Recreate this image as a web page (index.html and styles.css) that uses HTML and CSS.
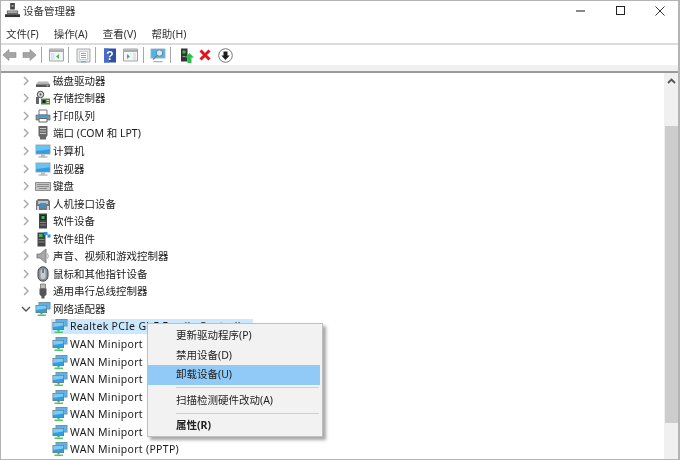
FILE: index.html
```html
<!DOCTYPE html>
<html lang="zh-CN">
<head>
<meta charset="utf-8">
<title>设备管理器</title>
<link rel="stylesheet" href="styles.css">
</head>
<body>
<svg class="defs" width="0" height="0" aria-hidden="true">
  <defs>
    <symbol id="chev-r" viewBox="0 0 8 10"><path d="M2 1l4 4-4 4" fill="none" stroke="#a6a6a6" stroke-width="1.4"/></symbol>
    <symbol id="chev-d" viewBox="0 0 10 8"><path d="M1 2l4 4 4-4" fill="none" stroke="#555" stroke-width="1.4"/></symbol>
    <symbol id="i-disk" viewBox="0 0 16 16"><path d="M3 8.500h10l2 3v2.500H1v-2.500z" fill="#b5b5b5"/><path d="M1 11.500h14V14H1z" fill="#555"/><path d="M11.500 12.300h2v1h-2z" fill="#9de08a"/></symbol>
    <symbol id="i-storage" viewBox="0 0 16 16"><circle cx="5.500" cy="4.500" r="3.200" fill="#d8d8d8" stroke="#444"/><circle cx="5.500" cy="4.500" r="1" fill="#444"/><path d="M1 7h3v7H1z" fill="#666"/><path d="M6 8.500h9v6H6z" fill="#4f8a58"/><path d="M7.500 10h3v3h-3z" fill="#222"/><path d="M11.500 10h2.500v1H11.500zM11.500 12h2.500v1H11.500z" fill="#d8d8a0"/></symbol>
    <symbol id="i-printer" viewBox="0 0 16 16"><path d="M4 2h8v5H4z" fill="#fff" stroke="#777"/><path d="M1 7h14v5H1z" fill="#8f979f" stroke="#555" stroke-width=".6"/><path d="M2.500 8h11v1.500h-11z" fill="#3aa0d8"/><path d="M4 10.500h8V14H4z" fill="#fff" stroke="#666"/></symbol>
    <symbol id="i-port" viewBox="0 0 16 16"><path d="M3.500 1h9v9.500l-1.500 2v2H5v-2l-1.500-2z" fill="#666"/><path d="M5 3h6v1H5zM5 5.500h6v1H5zM5 8h6v1H5z" fill="#c8c8c8"/></symbol>
    <symbol id="i-screen" viewBox="0 0 16 16"><path d="M.5 1.500h15v10H.5z" fill="#a8a8a8"/><path d="M1.200 2.200h13.600v8.600H1.200z" fill="#2e9fe6"/><path d="M1.200 2.200h13.600v4L1.200 8z" fill="#6cc3f2"/><path d="M6 11.500h4v2H6z" fill="#bbb"/><path d="M3.500 13.500h9v1h-9z" fill="#999"/></symbol>
    <symbol id="i-keyboard" viewBox="0 0 16 16"><path d="M.5 4.500h15v8H.5z" fill="#c6c6c6" stroke="#777" stroke-width=".8"/><path d="M2 6h12v1H2zM2 8h12v1H2zM4 10h8v1H4z" fill="#8b8b8b"/></symbol>
    <symbol id="i-hid" viewBox="0 0 16 16"><path d="M1 5l2-2h10l2 2v9H1z" fill="#72777d"/><path d="M3 5h10v3H3z" fill="#bcc3c9"/><path d="M5 7h6v5H5z" fill="#3f8fc8"/><path d="M2 10h2v4H2zM12 10h2v4h-2z" fill="#d5d5d5"/></symbol>
    <symbol id="i-softdev" viewBox="0 0 16 16"><path d="M4 .5h8v15H4z" fill="#444"/><path d="M5.200 2h5.600v5H5.200z" fill="#222"/><path d="M6.500 3h3v3h-3z" fill="#39c04a"/><path d="M5.200 9h5.600v1H5.200zM5.200 11.500h5.600v1H5.200z" fill="#888"/></symbol>
    <symbol id="i-softcomp" viewBox="0 0 16 16"><path d="M2.500 1.500h8v14h-8z" fill="#444"/><path d="M4 3h3.500v3H4z" fill="#39c04a"/><path d="M3.500 8h6v1h-6zM3.500 10.500h6v1h-6z" fill="#888"/><path d="M9 1h3.500v3H9zM12.500 3.500H15.500v3h-3z" fill="#2e8fd8"/></symbol>
    <symbol id="i-audio" viewBox="0 0 16 16"><path d="M2 6h3l6-5v14l-6-5H2z" fill="#a8a8a8" stroke="#6f6f6f" stroke-width=".8"/><path d="M12.500 5.500q1.500 2.500 0 5" fill="none" stroke="#9a9a9a"/></symbol>
    <symbol id="i-mouse" viewBox="0 0 16 16"><rect x="3" y=".8" width="10" height="14.400" rx="5" fill="#8c9299" stroke="#444"/><rect x="5.500" y="3" width="5" height="10" rx="2.500" fill="#c5ccd4"/><path d="M8 3v4" stroke="#444" stroke-width="1.200"/></symbol>
    <symbol id="i-usb" viewBox="0 0 16 16"><path d="M5.500 1h5v4.500h-5z" fill="#bdbdbd" stroke="#666" stroke-width=".7"/><path d="M4.500 5.500h7v6l-2 2v2h-3v-2l-2-2z" fill="#555"/></symbol>
    <symbol id="i-net" viewBox="0 0 16 16"><path d="M3.500 1h12v7.500h-12z" fill="#7d8b96"/><path d="M4.300 1.800h10.400v5.900H4.300z" fill="#58b4ea"/><path d="M.5 4h11.500v8H.5z" fill="#6f7d88"/><path d="M1.300 4.800h9.900v6.400H1.300z" fill="#2f9fe2"/><path d="M1.300 4.800h9.900v2.800L1.300 9z" fill="#7dcaf3"/><path d="M5.500 12h2v1.500h-2z" fill="#2fb84c"/><path d="M2.500 13.500h8.500V15H2.500z" fill="#4ec864"/></symbol>
  </defs>
</svg>

<div class="window">
  <header class="titlebar">
    <svg class="appicon" viewBox="0 0 16 16" width="15" height="15"><path d="M5.500 0h5v7h-5z" fill="#444"/><path d="M7 2h2v2H7z" fill="#aaa"/><path d="M2 8h12v4H2z" fill="#666"/><path d="M0 12h16v3H0z" fill="#333"/><path d="M3 9h10v1.500H3z" fill="#bbb"/></svg>
    <span class="title">设备管理器</span>
    <div class="controls">
      <span class="ctl ctl-min"></span>
      <span class="ctl ctl-max"></span>
      <svg class="ctl-close" viewBox="0 0 10 10" width="10" height="10"><path d="M.5.500l9 9M9.500.500l-9 9" stroke="#333" stroke-width="1" fill="none"/></svg>
    </div>
  </header>

  <nav class="menubar">
    <span class="menu-item">文件(F)</span>
    <span class="menu-item">操作(A)</span>
    <span class="menu-item">查看(V)</span>
    <span class="menu-item">帮助(H)</span>
  </nav>

  <div class="toolbar">
    <svg class="tb tb-back" viewBox="0 0 15 14"><path d="M7 1.500L.8 7 7 12.500V9.500h7v-5H7z" fill="#a5a5a5" stroke="#8a8a8a" stroke-width=".6"/></svg>
    <svg class="tb tb-fwd" viewBox="0 0 15 14"><path d="M8 1.500L14.200 7 8 12.500V9.500H1v-5h7z" fill="#a5a5a5" stroke="#8a8a8a" stroke-width=".6"/></svg>
    <span class="tsep tsep-a"></span>
    <svg class="tb tb-panel" viewBox="0 0 15 14"><path d="M.5 1h14v12H.500z" fill="#f3f5f7" stroke="#a0a4a8"/><path d="M1 1.500h13v2.500H1z" fill="#a9aeb3"/><path d="M2 5h3.500v7H2z" fill="#dfe4ea"/><path d="M10 6v5L7 8.500z" fill="#47b65a"/></svg>
    <span class="tsep tsep-b"></span>
    <svg class="tb tb-props" viewBox="0 0 15 15"><path d="M1 1h13v13H1z" fill="#e9ecef" stroke="#a6a9ad"/><path d="M3.500 3.500h8v8h-8z" fill="#fff" stroke="#b9bdc2" stroke-width=".7"/><path d="M5 5.500h5M5 7.500h5M5 9.500h5" stroke="#9aa0a6"/><path d="M5 13h5v1.500H5z" fill="#6ab9e6"/></svg>
    <span class="tsep tsep-c"></span>
    <svg class="tb tb-help" viewBox="0 0 12 15"><path d="M0 .5h12v14H0z" fill="#2f4fa8"/><path d="M0 .5h5v14H0z" fill="#4a6cc8"/><text x="6" y="11.500" text-anchor="middle" class="help-q">?</text></svg>
    <svg class="tb tb-panel2" viewBox="0 0 15 14"><path d="M.5 1h14v12H.500z" fill="#f3f5f7" stroke="#a0a4a8"/><path d="M1 1.500h13v2.500H1z" fill="#a9aeb3"/><path d="M10 5h3v7h-3z" fill="#dfe4ea"/><path d="M4 6v5l3-2.500z" fill="#47b65a"/></svg>
    <span class="tsep tsep-d"></span>
    <svg class="tb tb-scan" viewBox="0 0 16 15"><path d="M.5.500h15v10H.500z" fill="#9fb4c4"/><path d="M1.300 1.300h13.400v8.400H1.300z" fill="#4fb3ea"/><circle cx="9.500" cy="5" r="3.200" fill="#cfeafa" stroke="#6f8696"/><path d="M7 7.500L3 11.500" stroke="#6f8696" stroke-width="1.300"/><path d="M3.500 13h9v1.300h-9z" fill="#a9b3ba"/></svg>
    <span class="tsep tsep-e"></span>
    <svg class="tb tb-update" viewBox="0 0 14 15"><path d="M1 .5h6.500v13H1z" fill="#333"/><path d="M2.500 2.500h3v3h-3z" fill="#39c04a"/><path d="M2.500 8h3v1h-3z" fill="#999"/><path d="M9.500 5l4.500 4.500h-2.500V15h-4V9.500H5z" fill="#2fbf4f"/></svg>
    <svg class="tb tb-del" viewBox="0 0 12 12"><path d="M1.500 1.500l9 9M10.500 1.500l-9 9" stroke="#e0141e" stroke-width="3" fill="none"/></svg>
    <svg class="tb tb-down" viewBox="0 0 15 15"><circle cx="7.500" cy="7.500" r="6.800" fill="#fff" stroke="#777"/><path d="M5.500 3.500h4v4h2.200l-4.200 4.500-4.200-4.500h2.200z" fill="#1c1c1c"/></svg>
  </div>
  <div class="toolbar-foot"></div>

  <main class="content">
    <div class="tree">
      <div class="row"><svg class="chev"><use href="#chev-r"/></svg><svg class="ico"><use href="#i-disk"/></svg><span>磁盘驱动器</span></div>
      <div class="row"><svg class="chev"><use href="#chev-r"/></svg><svg class="ico"><use href="#i-storage"/></svg><span>存储控制器</span></div>
      <div class="row"><svg class="chev"><use href="#chev-r"/></svg><svg class="ico"><use href="#i-printer"/></svg><span>打印队列</span></div>
      <div class="row"><svg class="chev"><use href="#chev-r"/></svg><svg class="ico"><use href="#i-port"/></svg><span>端口 (COM 和 LPT)</span></div>
      <div class="row"><svg class="chev"><use href="#chev-r"/></svg><svg class="ico"><use href="#i-screen"/></svg><span>计算机</span></div>
      <div class="row"><svg class="chev"><use href="#chev-r"/></svg><svg class="ico"><use href="#i-screen"/></svg><span>监视器</span></div>
      <div class="row"><svg class="chev"><use href="#chev-r"/></svg><svg class="ico"><use href="#i-keyboard"/></svg><span>键盘</span></div>
      <div class="row"><svg class="chev"><use href="#chev-r"/></svg><svg class="ico"><use href="#i-hid"/></svg><span>人机接口设备</span></div>
      <div class="row"><svg class="chev"><use href="#chev-r"/></svg><svg class="ico"><use href="#i-softdev"/></svg><span>软件设备</span></div>
      <div class="row"><svg class="chev"><use href="#chev-r"/></svg><svg class="ico"><use href="#i-softcomp"/></svg><span>软件组件</span></div>
      <div class="row"><svg class="chev"><use href="#chev-r"/></svg><svg class="ico"><use href="#i-audio"/></svg><span>声音、视频和游戏控制器</span></div>
      <div class="row"><svg class="chev"><use href="#chev-r"/></svg><svg class="ico"><use href="#i-mouse"/></svg><span>鼠标和其他指针设备</span></div>
      <div class="row"><svg class="chev"><use href="#chev-r"/></svg><svg class="ico"><use href="#i-usb"/></svg><span>通用串行总线控制器</span></div>
      <div class="row"><svg class="chev chev-open"><use href="#chev-d"/></svg><svg class="ico"><use href="#i-net"/></svg><span>网络适配器</span></div>
      <div class="row child selected"><svg class="ico"><use href="#i-net"/></svg><span class="latin">Realtek PCIe GbE Family Controller</span></div>
      <div class="row child"><svg class="ico"><use href="#i-net"/></svg><span class="latin">WAN Miniport</span></div>
      <div class="row child"><svg class="ico"><use href="#i-net"/></svg><span class="latin">WAN Miniport</span></div>
      <div class="row child"><svg class="ico"><use href="#i-net"/></svg><span class="latin">WAN Miniport</span></div>
      <div class="row child"><svg class="ico"><use href="#i-net"/></svg><span class="latin">WAN Miniport</span></div>
      <div class="row child"><svg class="ico"><use href="#i-net"/></svg><span class="latin">WAN Miniport</span></div>
      <div class="row child"><svg class="ico"><use href="#i-net"/></svg><span class="latin">WAN Miniport</span></div>
      <div class="row child"><svg class="ico"><use href="#i-net"/></svg><span class="latin">WAN Miniport (PPTP)</span></div>
    </div>
    <aside class="scrollbar">
      <svg class="sb-up" viewBox="0 0 9 6" width="9" height="6"><path d="M1 5l3.500-3.500L8 5" fill="none" stroke="#555" stroke-width="1.800"/></svg>
      <div class="sb-thumb"></div>
    </aside>
  </main>

  <div class="context">
    <div class="ctx-item">更新驱动程序(P)</div>
    <div class="ctx-item">禁用设备(D)</div>
    <div class="ctx-item ctx-active">卸载设备(U)</div>
    <div class="ctx-sep"></div>
    <div class="ctx-item">扫描检测硬件改动(A)</div>
    <div class="ctx-sep"></div>
    <div class="ctx-item ctx-bold">属性(R)</div>
  </div>
</div>
</body>
</html>
```

FILE: styles.css
```css
* { box-sizing: border-box; }
html, body { margin: 0; padding: 0; }
body {
  width: 680px;
  height: 460px;
  overflow: hidden;
  background: #fff;
  color: #1a1a1a;
  font-family: "Noto Sans", "Noto Sans CJK SC", sans-serif;
  font-size: 10.5px;
  line-height: 14px;
}
.defs { position: absolute; }
.window {
  position: relative;
  width: 680px;
  height: 460px;
  display: flex;
  flex-direction: column;
  border: 1px solid #b4b4b4;
  border-right-width: 2px;
  background: #fff;
  overflow: hidden;
  filter: blur(.3px);
}
.titlebar {
  height: 19px;
  flex: none;
  display: flex;
  align-items: center;
  padding: 0 0 0 4px;
}
.appicon { flex: none; margin-right: 3px; }
.title { color: #333; }
.controls {
  margin-left: auto;
  display: flex;
  align-items: center;
  padding-right: 13px;
}
.ctl-min { width: 9px; height: 2px; background: #8a8a8a; margin-right: 31px; }
.ctl-max { width: 9px; height: 9px; border: 1px solid #222; margin-right: 30px; }
.ctl-close { flex: none; }
.menubar {
  height: 25px;
  flex: none;
  display: flex;
  align-items: center;
  gap: 15px;
  padding: 5px 0 0 5px;
  border-bottom: 2px solid #dcdcdc;
  color: #333;
}
.toolbar {
  height: 20px;
  flex: none;
  display: flex;
  align-items: center;
  padding-left: 1px;
}
.tb { display: block; flex: none; }
.tb-back, .tb-fwd { width: 15px; height: 14px; }
.tb-fwd { margin-left: 5px; }
.tsep { width: 1px; height: 16px; background: #a8a8a8; flex: none; }
.tsep-a { margin: 0 7px 0 4px; }
.tb-panel, .tb-panel2 { width: 15px; height: 14px; }
.tsep-b { margin: 0 7px 0 4px; }
.tb-props { width: 15px; height: 15px; }
.tsep-c { margin: 0 8px 0 4px; }
.tb-help { width: 12px; height: 15px; }
.help-q { font: bold 12px "Liberation Sans", sans-serif; fill: #fff; }
.tb-panel2 { margin-left: 7px; }
.tsep-d { margin: 0 6px 0 5px; }
.tb-scan { width: 16px; height: 15px; }
.tsep-e { margin: 0 9px 0 4px; }
.tb-update { width: 14px; height: 15px; }
.tb-del { width: 12px; height: 12px; margin-left: 5px; }
.tb-down { width: 15px; height: 15px; margin-left: 7px; }
.toolbar-foot {
  height: 8px;
  flex: none;
  background: #f0f0f0;
  border-bottom: 2px solid #9a9a9a;
}
.content {
  flex: 1;
  min-height: 0;
  display: flex;
  overflow: hidden;
}
.tree {
  flex: 1;
  min-width: 0;
  margin-top: -1px;
  overflow: hidden;
}
.row {
  height: 17.55px;
  display: flex;
  align-items: center;
  white-space: nowrap;
}
.chev { width: 8px; height: 10px; margin: 0 5px 0 21px; flex: none; }
.chev-open { width: 10px; height: 8px; margin: 0 4px 0 20px; }
.ico { width: 16px; height: 16px; margin-right: 2px; flex: none; }
.child { margin-left: 50px; padding-left: 1px; width: 202px; }
.child .ico { margin-right: 2px; }
.selected { background: #cce8ff; height: 15px; margin-top: 1.275px; margin-bottom: 1.275px; }
.latin { letter-spacing: .03em; }
.scrollbar {
  width: 14px;
  flex: none;
  background: #f0f0f0;
  display: flex;
  flex-direction: column;
  align-items: center;
}
.sb-up { margin-top: 5px; flex: none; }
.sb-thumb {
  width: 13px;
  height: 297px;
  margin-top: 42px;
  background: #cdcdcd;
  flex: none;
}
.context {
  position: absolute;
  left: 146px;
  top: 322px;
  width: 176px;
  height: 114px;
  padding: 2px 2px 2px 0;
  background: #f2f2f2;
  border: 1px solid #c0c0c0;
  box-shadow: 3px 3px 3px rgba(0, 0, 0, .35);
  color: #222;
}
.ctx-item { height: 19.6px; line-height: 19.6px; padding-left: 28px; }
.ctx-active { background: #91c9f7; }
.ctx-bold { font-weight: 700; }
.ctx-sep { height: 1px; background: #d0d0d0; margin: 2.5px 1px 2.5px 28px; }
```
